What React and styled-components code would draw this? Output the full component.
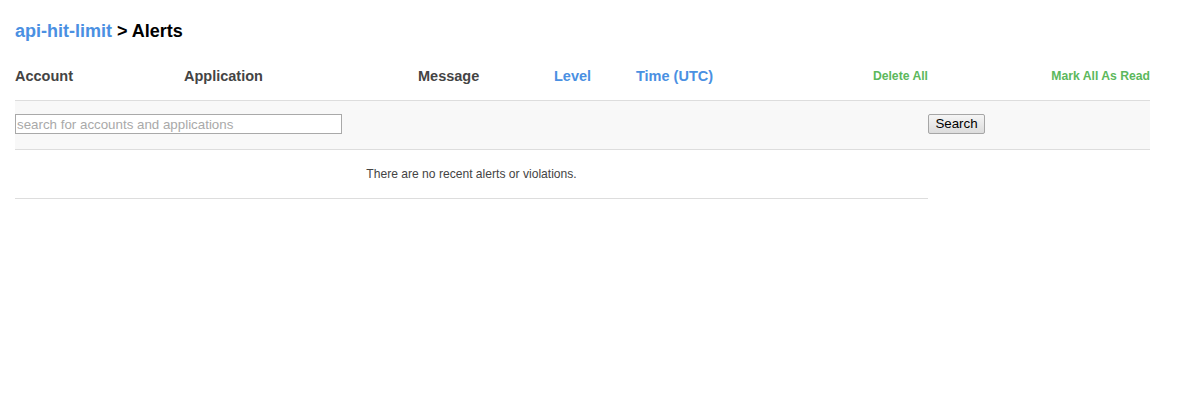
import React, { useState } from 'react';
import styled, { createGlobalStyle } from 'styled-components';

const GlobalStyle = createGlobalStyle`
  html, body {
    margin: 0;
    padding: 0;
    background: #fff;
    font-family: "Liberation Sans", Arial, sans-serif;
  }
`;

const Page = styled.div`
  padding: 20px 50px 0 15px;
`;

const Title = styled.h2`
  margin: 0 0 22px;
  font-size: 18px;
  font-weight: bold;
  line-height: 22px;
  color: #000;
  a {
    color: #4a90e2;
    text-decoration: none;
  }
`;

const Table = styled.table`
  width: 1135px;
  border-collapse: collapse;
  table-layout: fixed;
`;

const HeadCell = styled.th`
  padding: 0;
  height: 36px;
  vertical-align: top;
  text-align: ${(p) => p.$align || 'left'};
  font-size: ${(p) => (p.$small ? '12.2px' : '14.5px')};
  font-weight: bold;
  line-height: 25px;
  color: ${(p) => p.$color || '#444'};
  border-bottom: 1px solid #dddddd;
`;

const SearchRow = styled.tr`
  background: #f8f8f8;
  td {
    height: 46px;
    padding: 0 0 2px;
    border-bottom: 1px solid #dddddd;
    vertical-align: middle;
  }
`;

const EmptyCell = styled.td`
  height: 48px;
  padding: 0;
  text-align: center;
  font-size: 12.1px;
  color: #444;
  border-bottom: 1px solid #dddddd;
`;

const SearchInput = styled.input`
  width: 327px;
  height: 20px;
  box-sizing: border-box;
  margin: 0;
  padding: 0 1px;
  border: 1px solid #a9a9a9;
  font-family: "Liberation Sans", Arial, sans-serif;
  font-size: 13.333px;
  color: #333;
  background: #fff;
  outline: none;
  vertical-align: middle;
  &::placeholder {
    color: #a9a9a9;
  }
`;

const SearchButton = styled.button`
  height: 20px;
  width: 57px;
  box-sizing: border-box;
  margin: 0;
  padding: 0 6px;
  border: 1px solid #a6a6a6;
  border-radius: 2px;
  background: linear-gradient(#f5f5f5, #dcdcdc);
  font-family: "Liberation Sans", Arial, sans-serif;
  font-size: 13.333px;
  line-height: 16px;
  color: #000;
  vertical-align: middle;
`;

const columns = [
  { label: 'Account', width: 169 },
  { label: 'Application', width: 234 },
  { label: 'Message', width: 136 },
  { label: 'Level', width: 82, color: '#4a90e2' },
  { label: 'Time (UTC)', width: 124, color: '#4a90e2' },
  { label: 'Delete All', width: 168, color: '#5cb85c', align: 'right', small: true },
  { label: 'Mark All As Read', width: 222, color: '#5cb85c', align: 'right', small: true },
];

export default function App() {
  const [query, setQuery] = useState('');

  return (
    <Page>
      <GlobalStyle />
      <Title>
        <a href="#">api-hit-limit</a> &gt; Alerts
      </Title>
      <Table>
        <colgroup>
          {columns.map((c) => (
            <col key={c.label} style={{ width: c.width }} />
          ))}
        </colgroup>
        <thead>
          <tr>
            {columns.map((c) => (
              <HeadCell key={c.label} $color={c.color} $align={c.align} $small={c.small}>
                {c.label}
              </HeadCell>
            ))}
          </tr>
        </thead>
        <tbody>
          <SearchRow>
            <td colSpan={6}>
              <SearchInput
                value={query}
                onChange={(e) => setQuery(e.target.value)}
                placeholder="search for accounts and applications"
              />
            </td>
            <td>
              <SearchButton>Search</SearchButton>
            </td>
          </SearchRow>
          <tr>
            <EmptyCell colSpan={6}>There are no recent alerts or violations.</EmptyCell>
            <td />
          </tr>
        </tbody>
      </Table>
    </Page>
  );
}
